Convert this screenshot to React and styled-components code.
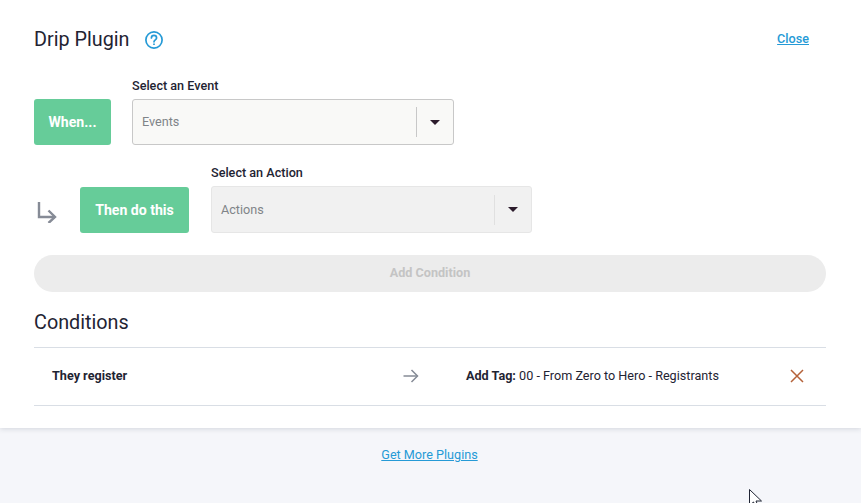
import styled, { createGlobalStyle } from "styled-components";

const GlobalStyle = createGlobalStyle`
    html, body {
        margin: 0;
        padding: 0;
        background: #f5f6fa;
    }
    body {
        font-family: Roboto, "Liberation Sans", sans-serif;
        color: #1f2433;
    }
`;

const Page = styled.div`
    position: relative;
    width: 861px;
    height: 503px;
    overflow: hidden;
`;

const Panel = styled.div`
    height: 428px;
    box-sizing: border-box;
    padding: 28px 35px 0 34px;
    background: #fff;
    box-shadow: 0 1px 5px rgba(40, 50, 70, 0.16);
`;

const Header = styled.div`
    display: flex;
    align-items: center;
    height: 24px;
`;

const Title = styled.h2`
    margin: 0;
    font-size: 19.8px;
    line-height: 24px;
    font-weight: 400;
`;

const Help = styled.svg`
    margin-left: 14px;
    width: 20px;
    height: 20px;
`;

const Close = styled.a`
    margin-left: auto;
    margin-right: 17px;
    margin-bottom: 4px;
    font-size: 12.64px;
    font-weight: 500;
    color: #259ad6;
    text-decoration: underline;
`;

const EventRow = styled.div`
    display: flex;
    align-items: flex-end;
    gap: ${(p) => p.$gap}px;
    margin-top: ${(p) => p.$top}px;
`;

const Badge = styled.div`
    display: flex;
    align-items: center;
    justify-content: center;
    width: ${(p) => p.$width}px;
    height: 46px;
    border-radius: 3px;
    background: #66cc99;
    color: #fff;
    font-size: 14.1px;
    font-weight: 700;
`;

const Field = styled.div`
    display: flex;
    flex-direction: column;
`;

const Label = styled.label`
    font-size: 12.64px;
    line-height: 14px;
    font-weight: 500;
    margin-bottom: 6px;
`;

const Select = styled.div`
    display: flex;
    align-items: center;
    box-sizing: border-box;
    width: ${(p) => p.$width}px;
    height: ${(p) => p.$height}px;
    padding-left: 9px;
    border: 1px solid ${(p) => (p.$disabled ? "#e6e6e6" : "#c8c8c8")};
    border-radius: 3px;
    background: ${(p) => (p.$disabled ? "#f1f1f1" : "#f9f9f7")};
    color: #808488;
    font-size: 12.64px;
`;

const SelectText = styled.span`
    flex: 1;
    margin-bottom: 1px;
`;

const Divider = styled.span`
    width: 1px;
    height: 30px;
    background: ${(p) => (p.$disabled ? "#e0e0e0" : "#c8c8c8")};
`;

const Caret = styled.span`
    width: 0;
    height: 0;
    margin: 0 13px;
    border-left: 5px solid transparent;
    border-right: 5px solid transparent;
    border-top: 5px solid #2c1c2c;
`;

const TurnIcon = styled.svg`
    width: 20px;
    height: 21px;
    margin-left: 3px;
    margin-bottom: 10px;
    margin-right: 1px;
`;

const AddButton = styled.button`
    display: block;
    width: 792px;
    height: 37px;
    margin-top: 22px;
    padding: 0 0 2px;
    border: 0;
    border-radius: 19px;
    background: #ececec;
    color: #c4c4c4;
    font-family: inherit;
    font-size: 12.64px;
    font-weight: 700;
`;

const Subtitle = styled.h3`
    margin: 19px 0 0;
    font-size: 19.8px;
    line-height: 24px;
    font-weight: 400;
`;

const ConditionRow = styled.div`
    display: grid;
    grid-template-columns: 351px 63px 324px 1fr;
    align-items: center;
    width: 792px;
    box-sizing: border-box;
    height: 59px;
    margin-top: 12px;
    padding: 0 0 1px 18px;
    border-top: 1px solid #d9dee5;
    border-bottom: 1px solid #d9dee5;
    font-size: 12.64px;
`;

const CellText = styled.span`
    margin-bottom: 1px;
`;

const Strong = styled.b`
    font-weight: 700;
`;

const Footer = styled.div`
    display: flex;
    justify-content: center;
    padding: 20px 2px 0 0;
`;

const MoreLink = styled.a`
    font-size: 12.64px;
    line-height: 14px;
    color: #259ad6;
    text-decoration: underline;
`;

const Pointer = styled.svg`
    position: absolute;
    left: 749px;
    top: 489px;
    width: 14px;
    height: 20px;
`;

export default function App() {
    return (
        <Page>
            <GlobalStyle />
            <Panel>
                <Header>
                    <Title>Drip Plugin</Title>
                    <Help viewBox="0 0 20 20" fill="none" stroke="#259ad6" strokeWidth="1.7">
                        <circle cx="10" cy="10" r="8.1" />
                        <path d="M7.4 8a2.6 2.6 0 0 1 5.2 0c0 1.8-2.6 2-2.6 3.8" strokeLinecap="round" />
                        <path d="M10 13.6v1.4" />
                    </Help>
                    <Close>Close</Close>
                </Header>

                <EventRow $gap={21} $top={27}>
                    <Badge $width={77}>When...</Badge>
                    <Field>
                        <Label>Select an Event</Label>
                        <Select $width={322} $height={46}>
                            <SelectText>Events</SelectText>
                            <Divider />
                            <Caret />
                        </Select>
                    </Field>
                </EventRow>

                <EventRow $gap={22} $top={21}>
                    <TurnIcon viewBox="0 0 20 21" fill="none" stroke="#868b96" strokeWidth="2.4">
                        <path d="M2 0v15h16" />
                        <path d="M11.5 8.5l6.5 6.5-6.5 6" />
                    </TurnIcon>
                    <Badge $width={109}>Then do this</Badge>
                    <Field>
                        <Label>Select an Action</Label>
                        <Select $disabled $width={321} $height={47}>
                            <SelectText>Actions</SelectText>
                            <Divider $disabled />
                            <Caret />
                        </Select>
                    </Field>
                </EventRow>

                <AddButton>Add Condition</AddButton>
                <Subtitle>Conditions</Subtitle>

                <ConditionRow>
                    <CellText>
                        <Strong>They register</Strong>
                    </CellText>
                    <svg width="16" height="14" viewBox="0 0 16 14" fill="none" stroke="#868b96" strokeWidth="1.5">
                        <path d="M0.5 7h14" />
                        <path d="M8.5 1l6 6-6 6" />
                    </svg>
                    <CellText>
                        <Strong>Add Tag:</Strong> 00 - From Zero to Hero - Registrants
                    </CellText>
                    <svg width="14" height="14" viewBox="0 0 14 14" fill="none" stroke="#b5623a" strokeWidth="1.5">
                        <path d="M1 1l12 12M13 1L1 13" />
                    </svg>
                </ConditionRow>
            </Panel>

            <Footer>
                <MoreLink>Get More Plugins</MoreLink>
            </Footer>

            <Pointer viewBox="0 0 14 20" fill="#fff" stroke="#1f2433" strokeWidth="1">
                <path d="M0.5 0.5v16l4-3.5 2.5 6 2.5-1-2.5-6h5.5z" />
            </Pointer>
        </Page>
    );
}
